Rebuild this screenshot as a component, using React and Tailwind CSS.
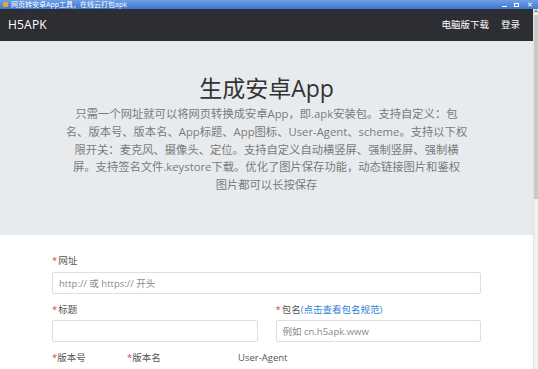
import { useState } from 'react';

const font = { fontFamily: '"Open Sans", "Noto Sans CJK SC", sans-serif' };

function Field({ label, required = true, link, placeholder, className = '' }) {
  return (
    <div className={`flex flex-col ${className}`}>
      <label className="h-[12px] flex items-center text-[9.5px] leading-none text-[#555]">
        {required && <span className="text-[#e4393c] mr-[1px]">*</span>}
        {label}
        {link && <span className="text-[#2f7fd8]">({link})</span>}
      </label>
      <input
        placeholder={placeholder}
        className="mt-[4px] h-[22px] w-full rounded-[2px] border border-[#dcdfe3] bg-white px-[6px] text-[9.5px] text-[#555] placeholder:text-[#8a8a8a] outline-none"
      />
    </div>
  );
}

export default function App() {
  const [url, setUrl] = useState('');

  return (
    <div style={font} className="w-[538px] h-[369px] overflow-hidden flex flex-col bg-white">
      {/* window title bar */}
      <div className="h-[9px] shrink-0 flex items-center bg-gradient-to-b from-[#6f9fe6] to-[#3f76cf] pl-[3px]">
        <span className="w-[5px] h-[5px] bg-[#e9a23b] rounded-[1px] mr-[3px]" />
        <span className="text-[7px] leading-none text-white">网页转安卓App工具，在线云打包apk</span>
        <div className="ml-auto flex h-full">
          <span className="w-[12px] h-full flex items-end justify-center pb-[2px]">
            <span className="w-[5px] h-[1px] bg-white" />
          </span>
          <span className="w-[12px] h-full flex items-center justify-center">
            <span className="w-[5px] h-[4px] border border-white" />
          </span>
          <span className="w-[16px] h-full flex items-center justify-center text-[7px] leading-none text-white">✕</span>
        </div>
      </div>

      <div className="flex flex-1 min-h-0">
        <div className="flex-1 flex flex-col min-w-0">
          {/* navbar */}
          <nav className="h-[32px] shrink-0 bg-[#2c2e33] flex items-center px-[8px] text-white">
            <span className="text-[12px] tracking-[0.2px]">H5APK</span>
            <div className="ml-auto flex items-center gap-[12px] text-[9.5px] pr-[5px]">
              <span>电脑版下载</span>
              <span>登录</span>
            </div>
          </nav>

          {/* jumbotron */}
          <section className="h-[194px] shrink-0 bg-[#e8ebee] flex flex-col items-center pt-[34px]">
            <h1 className="text-[23px] leading-[26px] text-[#333] font-normal">生成安卓App</h1>
            <p className="mt-[4px] text-[11.3px] leading-[17.8px] text-[#7a7a7a] text-center">
              只需一个网址就可以将网页转换成安卓App，即.apk安装包。支持自定义：包
              <br />
              名、版本号、版本名、App标题、App图标、User-Agent、scheme。支持以下权
              <br />
              限开关：麦克风、摄像头、定位。支持自定义自动横竖屏、强制竖屏、强制横
              <br />
              屏。支持签名文件.keystore下载。优化了图片保存功能，动态链接图片和鉴权
              <br />
              图片都可以长按保存
            </p>
          </section>

          {/* form */}
          <form className="flex-1 px-[52px] pt-[20px] flex flex-col gap-[10px]">
            <div className="flex flex-col">
              <label className="h-[12px] flex items-center text-[9.5px] leading-none text-[#555]">
                <span className="text-[#e4393c] mr-[1px]">*</span>网址
              </label>
              <input
                value={url}
                onChange={(e) => setUrl(e.target.value)}
                placeholder="http:// 或 https:// 开头"
                className="mt-[5px] h-[22px] w-full rounded-[2px] border border-[#dcdfe3] bg-white px-[6px] text-[9.5px] text-[#555] placeholder:text-[#8a8a8a] outline-none"
              />
            </div>
            <div className="flex gap-[18px]">
              <Field label="标题" className="flex-1" />
              <Field label="包名" link="点击查看包名规范" placeholder="例如 cn.h5apk.www" className="flex-1" />
            </div>
            <div className="flex text-[9.5px] leading-none text-[#555] h-[12px] items-center">
              <span className="w-[75px]"><span className="text-[#e4393c]">*</span>版本号</span>
              <span className="w-[111px]"><span className="text-[#e4393c]">*</span>版本名</span>
              <span>User-Agent</span>
            </div>
          </form>
        </div>

        {/* scrollbar */}
        <div className="w-[5px] shrink-0 flex flex-col bg-[#f1f1f1] border-l border-[#e2e2e2]">
          <div className="h-[6px] flex items-center justify-center text-[4px] leading-none text-[#888]">▲</div>
          <div className="h-[184px] bg-[#c9c9c9]" />
        </div>
      </div>
    </div>
  );
}
